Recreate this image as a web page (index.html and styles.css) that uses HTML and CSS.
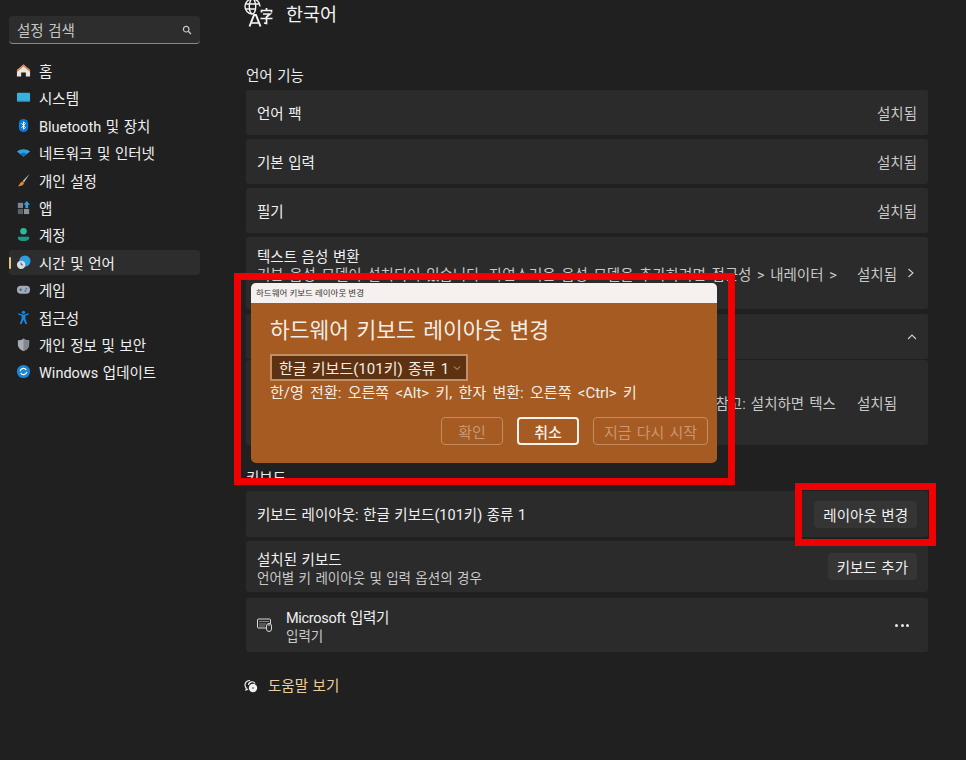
FILE: index.html
```html
<!DOCTYPE html>
<html lang="ko">
<head>
<meta charset="utf-8">
<title>한국어</title>
<link rel="stylesheet" href="styles.css">
</head>
<body>
<div class="app">
  <aside class="sidebar">
    <div class="search"><span>설정 검색</span>
      <svg width="10" height="10" viewBox="0 0 10 10"><circle cx="4.2" cy="4.2" r="2.8" fill="none" stroke="#c8c8c8" stroke-width="1.2"/><path d="M6.3 6.3L9 9" stroke="#c8c8c8" stroke-width="1.3"/></svg>
    </div>
    <nav class="nav">
      <a class="nav-item"><svg class="ico" viewBox="0 0 16 16"><path d="M8 1.500L15 7.500V14.500H10.500V10H5.500V14.500H1V7.500Z" fill="#e8e4e0"/><path d="M8 1.500L15 7.500V9.500L8 3.800L1 9.500V7.500Z" fill="#d9814a"/></svg>홈</a>
      <a class="nav-item"><svg class="ico" viewBox="0 0 16 16"><rect x="1" y="3" width="14" height="9.500" rx="1" fill="#3ab1dc"/><rect x="1" y="11.500" width="14" height="1.200" fill="#1b7fa8"/></svg>시스템</a>
      <a class="nav-item"><svg class="ico" viewBox="0 0 16 16"><rect x="3" y="1" width="10" height="14" rx="5" fill="#0c78dc"/><path d="M5.800 5.500L10 10L8 12V4L10 6L5.800 10.500" fill="none" stroke="#fff" stroke-width="1"/></svg>Bluetooth 및 장치</a>
      <a class="nav-item"><svg class="ico" viewBox="0 0 16 16"><path d="M1 7C5 3.800 11 3.800 15 7L8 12.500Z" fill="#2fa3e0"/><path d="M4.500 9.500C6.500 8 9.500 8 11.500 9.500L8 12.500Z" fill="#0f6cc0"/></svg>네트워크 및 인터넷</a>
      <a class="nav-item"><svg class="ico" viewBox="0 0 16 16"><path d="M14.500 1L7 8.500L8.500 10Z" fill="#b9bcc0"/><path d="M6.500 9C4.500 9.500 4.500 12 2 14C5 14.500 8.500 13 8.500 10.500Z" fill="#e8862e"/></svg>개인 설정</a>
      <a class="nav-item"><svg class="ico" viewBox="0 0 16 16"><rect x="2" y="3" width="5.500" height="5.500" fill="#7d8690"/><rect x="2" y="9.500" width="5.500" height="5.500" fill="#596069"/><rect x="8.500" y="9.500" width="5.500" height="5.500" fill="#8a9199"/><path d="M11.500 1L15 5H13V8.500H10V5H8Z" fill="#3a9be0"/></svg>앱</a>
      <a class="nav-item"><svg class="ico" viewBox="0 0 16 16"><circle cx="8" cy="4.500" r="3.500" fill="#2bb9a0"/><path d="M2 10.500H14V12C14 14 11 15 8 15S2 14 2 12Z" fill="#1a9a86"/></svg>계정</a>
      <a class="nav-item active"><i class="pill"></i><svg class="ico" viewBox="0 0 16 16"><circle cx="9.500" cy="6.500" r="6" fill="#2a9fdc"/><circle cx="5.500" cy="10.500" r="4.500" fill="#d8dde2"/><path d="M5.500 8V10.500H7.500" fill="none" stroke="#555" stroke-width="1"/></svg>시간 및 언어</a>
      <a class="nav-item"><svg class="ico" viewBox="0 0 16 16"><rect x="1" y="4" width="14" height="8.500" rx="4.200" fill="#a3abb3"/><path d="M3.500 8.200H6.500M5 6.700V9.700" stroke="#4a5a66" stroke-width="1"/><circle cx="11" cy="7" r="1" fill="#2a7fc0"/><circle cx="10" cy="9.500" r="1" fill="#2a7fc0"/></svg>게임</a>
      <a class="nav-item"><svg class="ico" viewBox="0 0 16 16"><circle cx="8" cy="2.500" r="1.800" fill="#1b86dd"/><path d="M2 4.500L6 6V9L4 15H6L8 10.500L10 15H12L10 9V6L14 4.500L13.500 3.500L8 5L2.500 3.500Z" fill="#1b86dd"/></svg>접근성</a>
      <a class="nav-item"><svg class="ico" viewBox="0 0 16 16"><path d="M8 1.500C10 3 12 3.500 14 3.500V8C14 11.500 11 14 8 15C5 14 2 11.500 2 8V3.500C4 3.500 6 3 8 1.500Z" fill="#a7adb3"/><path d="M8 1.500C10 3 12 3.500 14 3.500V8C14 11.500 11 14 8 15Z" fill="#82888e"/></svg>개인 정보 및 보안</a>
      <a class="nav-item"><svg class="ico" viewBox="0 0 16 16"><circle cx="8" cy="8" r="7" fill="#1a86d8"/><path d="M4.500 7.500A3.500 3.500 0 0 1 11 6.500M11.500 8.500A3.500 3.500 0 0 1 5 9.500" fill="none" stroke="#fff" stroke-width="1.200"/></svg>Windows 업데이트</a>
    </nav>
  </aside>

  <main class="main">
    <header class="title">
      <svg class="title-ico" width="30" height="28" viewBox="0 0 30 28"><g fill="none" stroke="#f4f4f4" stroke-width="1.400"><path d="M8 15A7.500 7.500 0 1 1 16 7.500"/><ellipse cx="8.500" cy="7.500" rx="3.200" ry="7.500"/><path d="M1 5H16M1 10H11"/></g><g fill="none" stroke="#f4f4f4" stroke-width="1.700"><path d="M17.500 13.500V11.500H27.500V13.500M22.500 9V11.500M19 15H26L22.500 18V24.500L20 24M16.500 19.500H28.500"/></g><path d="M5.500 27.500L10 16H12L16.500 27.500" fill="none" stroke="#f4f4f4" stroke-width="2"/><path d="M7.500 24H14.500" stroke="#f4f4f4" stroke-width="1.600"/></svg>
      <h1>한국어</h1>
    </header>

    <h2 class="section-label first">언어 기능</h2>
    <div class="list">
      <div class="row r45"><span class="t">언어 팩</span><span class="st">설치됨</span></div>
      <div class="row r45"><span class="t">기본 입력</span><span class="st">설치됨</span></div>
      <div class="row r45"><span class="t">필기</span><span class="st">설치됨</span></div>
      <div class="row r72">
        <div class="col top"><span class="t">텍스트 음성 변환</span><span class="sub">기본 음성 모델이 설치되어 있습니다. 자연스러운 음성 모델을 추가하려면 접근성 &gt; 내레이터 &gt;</span></div>
        <span class="st">설치됨</span>
        <svg class="chev" width="8" height="10" viewBox="0 0 8 10"><path d="M1.500 1L6 5L1.500 9" fill="none" stroke="#d0d0d0" stroke-width="1.100"/></svg>
      </div>
      <div class="group">
        <div class="row r45 head">
          <svg class="chev up" width="10" height="8" viewBox="0 0 10 8"><path d="M1 6L5 2L9 6" fill="none" stroke="#d0d0d0" stroke-width="1.100"/></svg>
        </div>
        <div class="row r85"><span class="longnote">참고: 설치하면 텍스</span><span class="st">설치됨</span></div>
      </div>
    </div>

    <h2 class="section-label second">키보드</h2>
    <div class="list kb">
      <div class="row r46"><span class="t">키보드 레이아웃: 한글 키보드(101키) 종류 1</span><button class="btn">레이아웃 변경</button></div>
      <div class="row r51"><div class="col"><span class="t">설치된 키보드</span><span class="sub">언어별 키 레이아웃 및 입력 옵션의 경우</span></div><button class="btn">키보드 추가</button></div>
      <div class="row r54 ime">
        <svg class="ime-ico" width="16" height="16" viewBox="0 0 16 16"><g fill="none" stroke="#d8d8d8" stroke-width="1"><rect x=".5" y="2" width="13" height="9" rx="1"/><path d="M2.500 4.500H11.500M2.500 7H9M2.500 9H8" stroke-dasharray="1 1"/><rect x="9.500" y="6.500" width="5" height="8" rx="2.500" fill="#2c2c2c"/><path d="M12 6.500V9"/></g></svg>
        <div class="col"><span class="t tight">Microsoft 입력기</span><span class="sub">입력기</span></div>
        <span class="dots"><i></i><i></i><i></i></span>
      </div>
    </div>

    <a class="help"><svg width="14" height="14" viewBox="0 0 14 14"><path d="M6 1.500C3 1.500 1 3.500 1 6C1 7.200 1.500 8.300 2.300 9L2 11L4.200 10" fill="none" stroke="#f0f0f0" stroke-width="1.200"/><path d="M4.500 6A3.500 3.500 0 0 1 11 4.500" fill="none" stroke="#f0f0f0" stroke-width="1.200"/><circle cx="9" cy="9" r="4.200" fill="#f0f0f0"/><circle cx="9" cy="9" r=".8" fill="#333"/></svg><span>도움말 보기</span></a>
  </main>
</div>

<section class="dialog">
  <div class="dlg-bar">하드웨어 키보드 레이아웃 변경</div>
  <div class="dlg-body">
    <h3>하드웨어 키보드 레이아웃 변경</h3>
    <div class="select"><span>한글 키보드(101키) 종류 1</span><svg width="8" height="6" viewBox="0 0 8 6"><path d="M1 1.500L4 4.500L7 1.500" fill="none" stroke="#caa98c" stroke-width="1"/></svg></div>
    <p>한/영 전환: 오른쪽 &lt;Alt&gt; 키, 한자 변환: 오른쪽 &lt;Ctrl&gt; 키</p>
    <div class="dlg-btns">
      <button class="dbtn off ok">확인</button>
      <button class="dbtn on">취소</button>
      <button class="dbtn off restart">지금 다시 시작</button>
    </div>
  </div>
</section>
<div class="mark mark-dialog"></div>
<div class="mark mark-btn"></div>
</body>
</html>
```

FILE: styles.css
```css
* { box-sizing: border-box; }
html, body { margin: 0; height: 100%; }
body {
  background: #202020;
  color: #f2f2f2;
  font-family: Roboto, "Noto Sans CJK KR", sans-serif;
  font-size: 14.500px;
  word-spacing: 1px;
  overflow: hidden;
  position: relative;
  width: 966px;
  height: 760px;
}
.app { display: flex; height: 760px; }
.sidebar { width: 246px; flex: none; padding: 16px 46px 0 9px; }
.search {
  height: 28px;
  background: #2d2d2d;
  border-bottom: 1px solid #8a8a8a;
  border-radius: 4px;
  display: flex;
  align-items: center;
  justify-content: space-between;
  padding: 0 8px;
  color: #c5c5c5;
}
.nav { margin-top: 14px; display: flex; flex-direction: column; gap: 2.400px; }
.nav-item {
  position: relative;
  height: 25px;
  display: flex;
  align-items: center;
  padding-left: 7px;
  gap: 8px;
  border-radius: 4px;
  color: #f0f0f0;
  white-space: nowrap;
}
.nav-item.active { background: #2d2d2d; }
.pill { position: absolute; left: 0; top: 7px; width: 2px; height: 12px; background: #e9c07c; border-radius: 1px; }
.ico { width: 15px; height: 15px; flex: none; }

.main { width: 682px; flex: none; position: relative; }
.title { display: flex; align-items: flex-start; height: 27px; margin-left: -2px; gap: 12px; margin-top: -1px; }
.title-ico { flex: none; }
.title h1 { margin: 0; padding-top: 2px; font-size: 18.500px; font-weight: 400; line-height: 28px; color: #f2f2f2; }
.section-label { margin: 0; padding-top: 3px; height: 20px; font-size: 14.500px; font-weight: 400; line-height: 18px; color: #ececec; }
.section-label.first { margin-top: 39px; }
.section-label.second { margin-top: 22px; }
.list { display: flex; flex-direction: column; gap: 4px; margin-top: 5px; }
.list.kb { margin-top: 4px; }
.row {
  background: #2b2b2b;
  border-radius: 3px;
  display: flex;
  align-items: center;
  padding: 0 11px;
  gap: 12px;
  white-space: nowrap;
}
.r45 { height: 45px; }
.r46 { height: 46px; }
.r51 { height: 51px; }
.r54 { height: 54px; margin-top: 2px; }
.r72 { height: 72px; padding-right: 13px; gap: 10px; }
.r85 { height: 85px; margin-top: 1px; justify-content: flex-end; padding-right: 31px; gap: 21px; }
.group { margin-top: 1px; }
.t { color: #f0f0f0; line-height: 18px; }
.t.tight { letter-spacing: -.3px; }
.row > .t { padding-top: 4px; }
.st { color: #c8c8c8; margin-left: auto; }
.r85 .st { margin-left: 0; }
.col { display: flex; flex-direction: column; min-width: 0; padding-top: 5px; }
.col.top { align-self: flex-start; padding-top: 12px; }
.sub { font-size: 13.500px; color: #c8c8c8; line-height: 17px; }
.r72 .sub { font-size: 14.500px; line-height: 18px; word-spacing: 2px; }
.row.head { justify-content: flex-end; padding-right: 11px; }
.chev { flex: none; }
.longnote { color: #c8c8c8; word-spacing: 1.500px; }
.row > .btn { margin-left: auto; }
.btn {
  height: 27px;
  padding: 0 9px;
  background: #353535;
  border: none;
  border-radius: 4px;
  color: #f0f0f0;
  font: inherit;
  word-spacing: inherit;
}
.ime { gap: 12px; }
.ime-ico { flex: none; margin-right: 1px; }
.dots { margin-left: auto; display: flex; gap: 2.500px; padding-right: 8px; }
.dots i { width: 3px; height: 3px; border-radius: 50%; background: #e8e8e8; }
.help { display: flex; align-items: center; gap: 10px; margin-top: 22px; color: #e7cf9b; line-height: 18px; }
.help span { padding-top: 4px; }
.help svg { margin-left: -2px; margin-top: 2px; }

.dialog {
  position: absolute;
  left: 251px;
  top: 283px;
  width: 466px;
  height: 180px;
  background: #a55b21;
  border-radius: 5px;
  overflow: hidden;
  font-size: 15px;
  word-spacing: 1.500px;
}
.dlg-bar {
  height: 20px;
  background: #f6f0ee;
  color: #333;
  font-size: 8.500px;
  word-spacing: 0;
  line-height: 20px;
  padding-left: 5px;
}
.dlg-body { padding: 14px 9px 0 19px; }
.dlg-body h3 { margin: 0; font-size: 21.500px; word-spacing: 2px; font-weight: 400; line-height: 28px; color: #f4ede6; }
.select {
  margin-top: 9px;
  width: 198px;
  height: 27px;
  background: #5e3211;
  border: 2px solid #c08f62;
  display: flex;
  align-items: center;
  justify-content: space-between;
  padding: 0 5px 0 7px;
  color: #f4ede6;
  white-space: nowrap;
}
.dlg-body p { margin: 2px 0 0; line-height: 20px; color: #f4ede6; white-space: nowrap; word-spacing: 2.600px; }
.dlg-btns { display: flex; justify-content: flex-end; gap: 14px; margin-top: 14px; }
.dbtn {
  height: 28px;
  background: transparent;
  border-radius: 4px;
  font: inherit;
  word-spacing: inherit;
  padding: 0;
}
.dbtn.off { border: 1.500px solid #c48d60; color: #c99772; }
.dbtn.on { border: 2px solid #f8f2ec; color: #f8f2ec; font-weight: 500; width: 62px; }
.dbtn.ok { width: 62px; }
.dbtn.restart { width: 115px; }

.mark { position: absolute; border: 7px solid #f00000; pointer-events: none; }
.mark-dialog { left: 234px; top: 273px; width: 501px; height: 212px; }
.mark-btn { left: 795px; top: 483px; width: 141px; height: 63px; }
```
